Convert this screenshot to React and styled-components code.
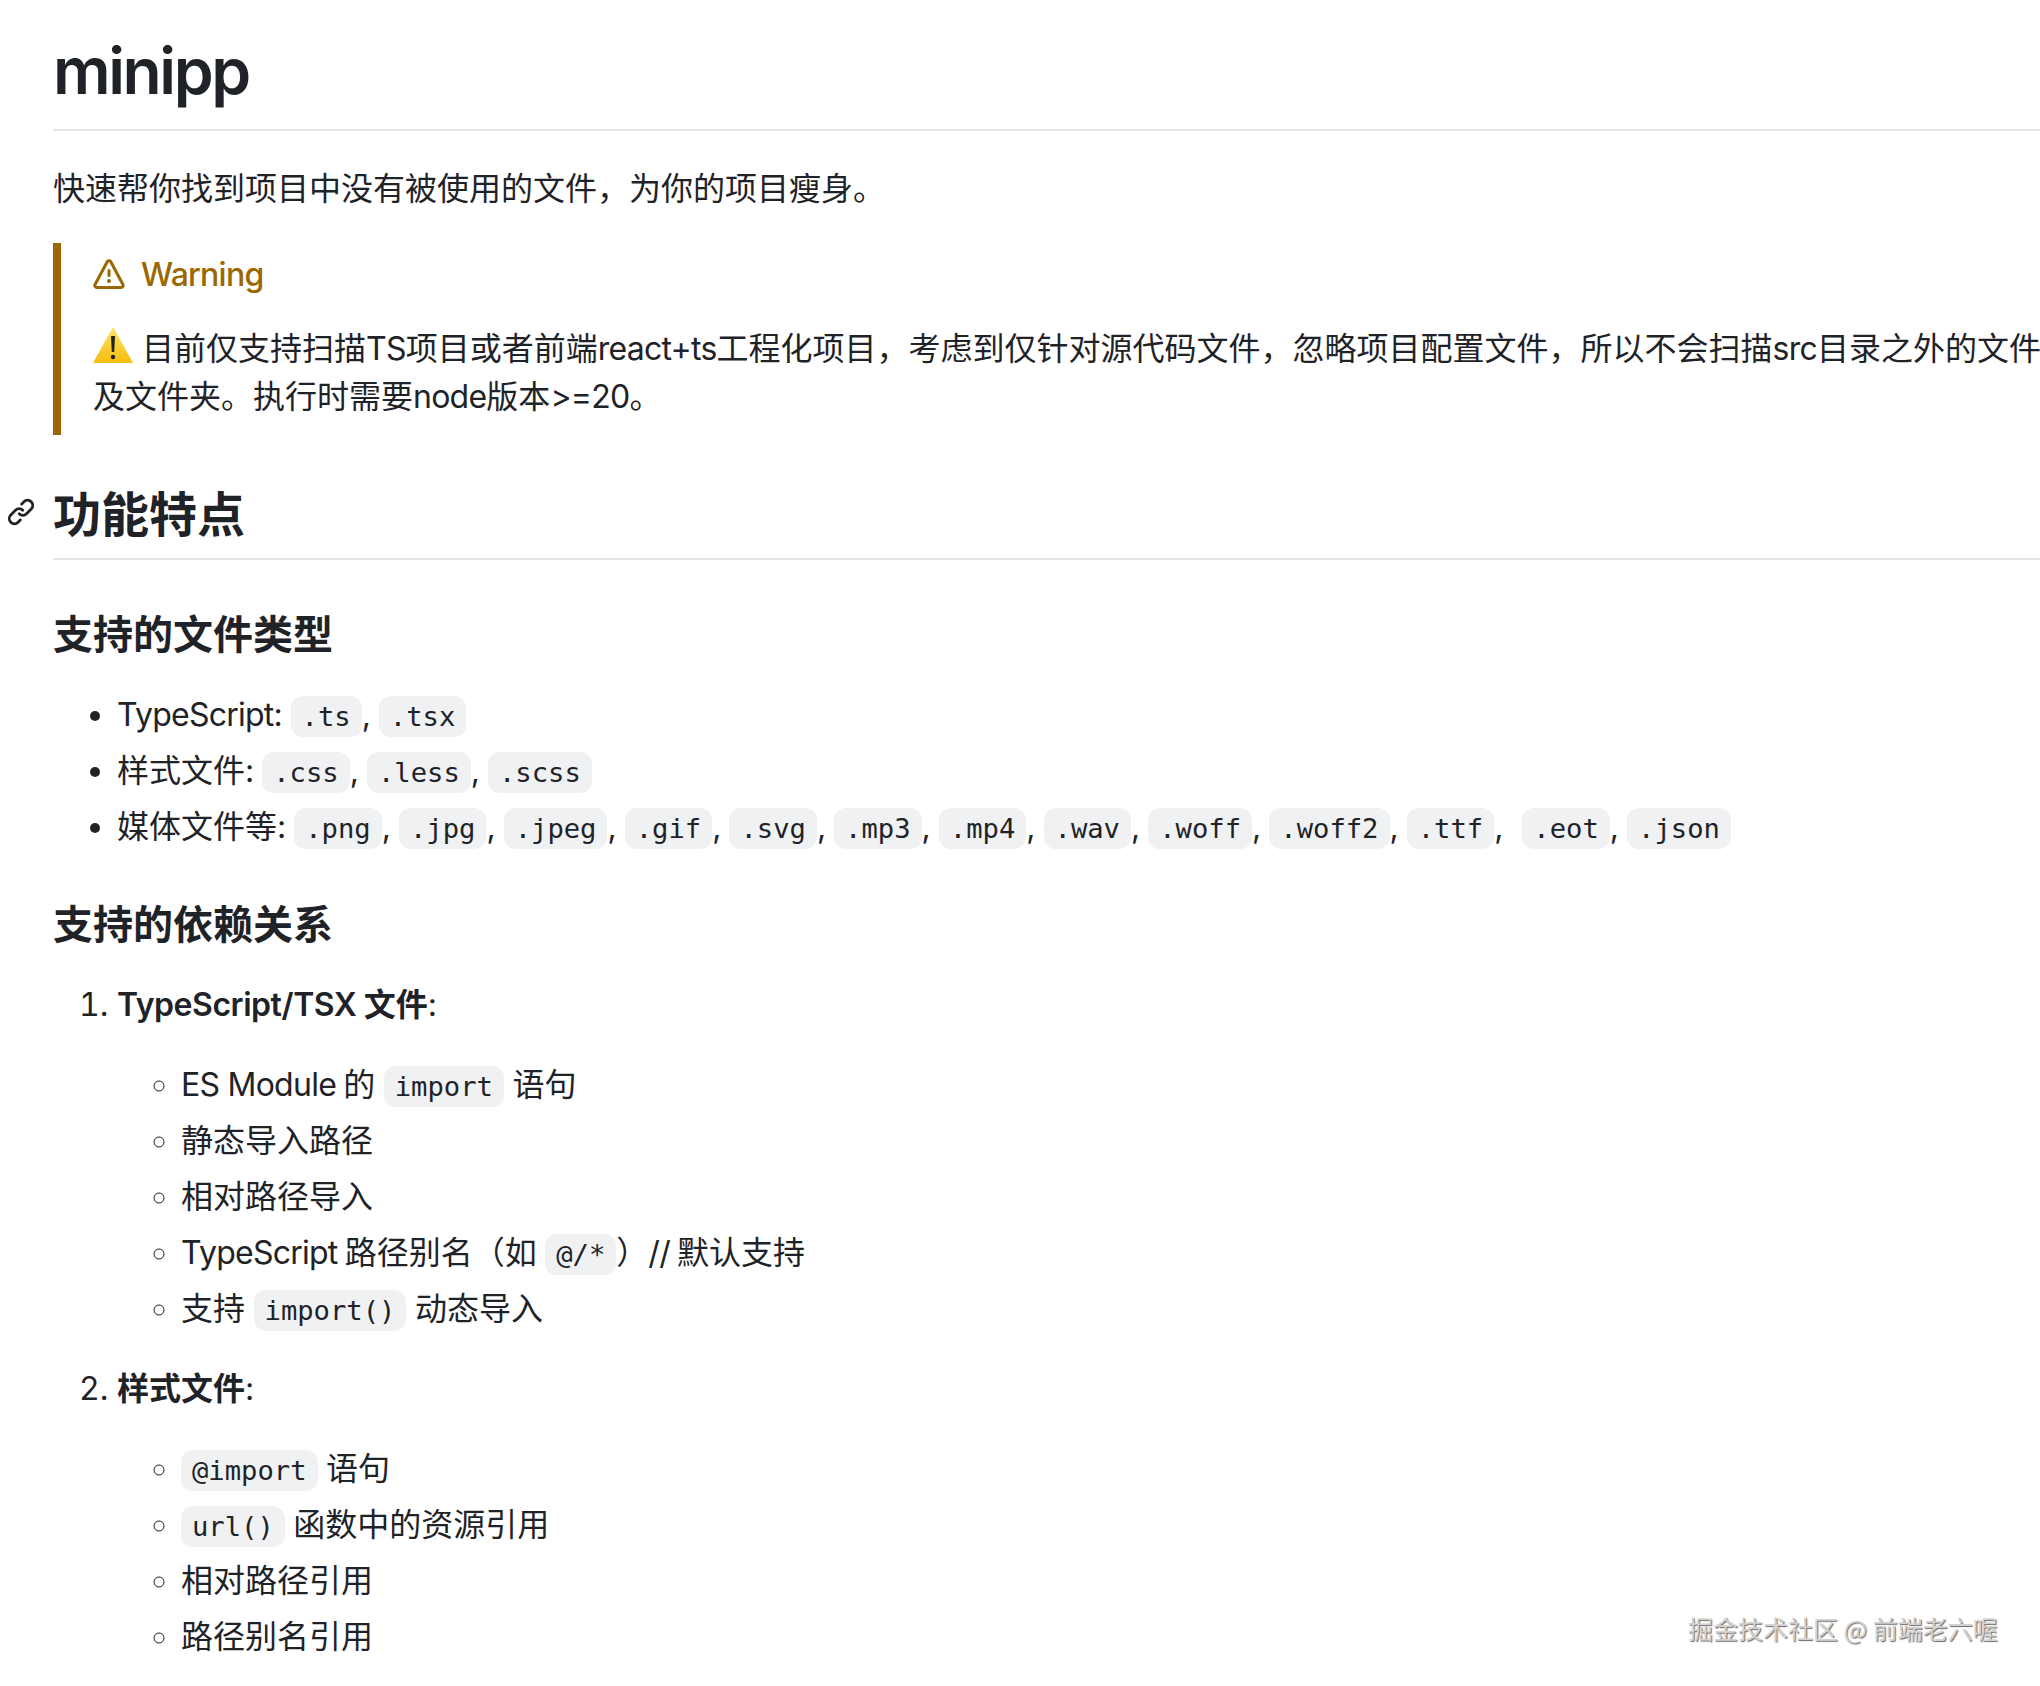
import styled, { createGlobalStyle } from 'styled-components'

const GlobalStyle = createGlobalStyle`
  html, body {
    margin: 0;
    padding: 0;
    background: #fff;
  }
  body {
    width: 2040px;
    height: 1686px;
    overflow: hidden;
  }
`

const Page = styled.div`
  position: relative;
  width: 2040px;
  height: 1686px;
  overflow: hidden;
  box-sizing: border-box;
  padding: 30px 0 0 53px;
  color: #1f2328;
  font-family: "Noto Sans CJK SC", sans-serif;
  font-size: 32px;
  line-height: 48px;
`

// latin runs in the reference are tighter than Inter's default tracking
const Latin = styled.span`
  font-family: Inter, sans-serif;
  line-height: 1;
  letter-spacing: -0.75px;
`

// commas, colons and the spaces round the code chips
const Punct = styled.span`
  font-family: Inter, sans-serif;
  font-weight: 400;
  line-height: 1;
  letter-spacing: -0.5px;
  white-space: pre-wrap;
`

const Title = styled.h1`
  margin: 0 0 31px;
  padding: 1px 0 18px;
  border-bottom: 2px solid #e2e4e7;
  font-family: Inter, sans-serif;
  font-size: 64px;
  line-height: 80px;
  font-weight: 600;
  letter-spacing: -2.4px;
`

const Para = styled.p`
  margin: 0 0 33px;
`

const Alert = styled.div`
  border-left: 8px solid #9a6700;
  padding: 8px 0 17px 32px;
  margin-bottom: 46px;
  white-space: nowrap;
`

const AlertTitle = styled.p`
  display: flex;
  align-items: center;
  gap: 16px;
  height: 48px;
  margin: 0 0 23px;
  color: #9a6700;
  font-weight: 500;
`

const AlertText = styled.p`
  margin: 0;
`

const Emoji = styled.svg`
  width: 40px;
  height: 36px;
  margin-right: 9px;
  vertical-align: -3px;
`

const Section = styled.h2`
  position: relative;
  margin: 0 0 47px;
  padding-bottom: 17px;
  border-bottom: 2px solid #e2e4e7;
  font-size: 48px;
  line-height: 60px;
  font-weight: 700;
`

const Anchor = styled.svg`
  position: absolute;
  left: -47px;
  top: 16px;
  width: 30px;
  height: 30px;
  color: #1f2328;
`

const SubTitle = styled.h3`
  margin: 0 0 31px;
  font-size: 40px;
  line-height: 50px;
  font-weight: 700;
`

const BulletList = styled.ul`
  margin: 0 0 49px;
  padding-left: 64px;
  list-style: disc;
`

const NumberList = styled.ol`
  margin: 0;
  padding-left: 64px;
`

const NestedList = styled.ul`
  margin: 0;
  padding-left: 64px;
  list-style: circle;
`

const Item = styled.li`
  &::marker {
    font-family: Inter, sans-serif;
  }
  & + & {
    margin-top: 8px;
  }
`

const NumberItem = styled.li`
  &::marker {
    font-family: Inter, sans-serif;
  }
  & + & {
    margin-top: 32px;
  }
`

const ItemHead = styled.p`
  margin: 0 0 32px;
  font-weight: 600;

  ${Latin} {
    letter-spacing: -0.45px;
  }
`

const Code = styled.code`
  padding: 5px 11px;
  border-radius: 12px;
  background: #eff1f3;
  font-family: "DejaVu Sans Mono", "Liberation Mono", monospace;
  font-size: 27.2px;
  line-height: 1;
`

const Watermark = styled.div`
  position: absolute;
  left: 1688px;
  top: 1610px;
  color: #d2d2d2;
  font-size: 25px;
  line-height: 36px;
  white-space: nowrap;
  text-shadow: 1px 1px 1px #6a6a6a;
`

const mediaTypes = ['.png', '.jpg', '.jpeg', '.gif', '.svg', '.mp3', '.mp4', '.wav', '.woff', '.woff2', '.ttf']

export default function App() {
  return (
    <Page>
      <GlobalStyle />
      <Title>minipp</Title>
      <Para>快速帮你找到项目中没有被使用的文件，为你的项目瘦身。</Para>

      <Alert>
        <AlertTitle>
          <svg viewBox="0 0 16 16" width="32" height="32" fill="currentColor">
            <path d="M6.457 1.047c.659-1.234 2.427-1.234 3.086 0l6.082 11.378A1.75 1.75 0 0 1 14.082 15H1.918a1.75 1.75 0 0 1-1.543-2.575Zm1.763.707a.25.25 0 0 0-.44 0L1.698 13.132a.25.25 0 0 0 .22.368h12.164a.25.25 0 0 0 .22-.368Zm.53 3.996v2.5a.75.75 0 0 1-1.5 0v-2.5a.75.75 0 0 1 1.5 0ZM9 11a1 1 0 1 1-2 0 1 1 0 0 1 2 0Z" />
          </svg>
          <Latin>Warning</Latin>
        </AlertTitle>
        <AlertText>
          <Emoji viewBox="0 0 40 36">
            <defs>
              <linearGradient id="warn" x1="0" y1="0" x2="0" y2="1">
                <stop offset="0" stopColor="#fde468" />
                <stop offset="1" stopColor="#f7bd0c" />
              </linearGradient>
            </defs>
            <path d="M20 0 L40 36 H0 Z" fill="url(#warn)" />
            <path d="M18 9 h4 l-.8 16 h-2.4 Z" fill="#222" />
            <circle cx="20" cy="30" r="2.2" fill="#222" />
          </Emoji>
          目前仅支持扫描<Latin>TS</Latin>项目或者前端<Latin>react+ts</Latin>工程化项目，考虑到仅针对源代码文件，忽略项目配置文件，所以不会扫描<Latin>src</Latin>目录之外的文件
          <br />
          及文件夹。执行时需要<Latin>node</Latin>版本<Latin>&gt;=20</Latin>。
        </AlertText>
      </Alert>

      <Section>
        <Anchor viewBox="0 0 16 16" fill="currentColor">
          <path d="m7.775 3.275 1.25-1.25a3.5 3.5 0 1 1 4.95 4.95l-2.5 2.5a3.5 3.5 0 0 1-4.95 0 .751.751 0 0 1 .018-1.042.751.751 0 0 1 1.042-.018 1.998 1.998 0 0 0 2.83 0l2.5-2.5a2.002 2.002 0 0 0-2.83-2.83l-1.25 1.25a.751.751 0 0 1-1.042-.018.751.751 0 0 1-.018-1.042Zm-4.69 9.64a1.998 1.998 0 0 0 2.83 0l1.25-1.25a.751.751 0 0 1 1.042.018.751.751 0 0 1 .018 1.042l-1.25 1.25a3.5 3.5 0 1 1-4.95-4.95l2.5-2.5a3.5 3.5 0 0 1 4.95 0 .751.751 0 0 1-.018 1.042.751.751 0 0 1-1.042.018 1.998 1.998 0 0 0-2.83 0l-2.5 2.5a1.998 1.998 0 0 0 0 2.83Z" />
        </Anchor>
        功能特点
      </Section>

      <SubTitle>支持的文件类型</SubTitle>
      <BulletList>
        <Item><Latin>TypeScript:</Latin><Punct> </Punct><Code>.ts</Code><Punct>, </Punct><Code>.tsx</Code></Item>
        <Item>样式文件<Punct>: </Punct><Code>.css</Code><Punct>, </Punct><Code>.less</Code><Punct>, </Punct><Code>.scss</Code></Item>
        <Item>
          媒体文件等<Punct>: </Punct>
          {mediaTypes.map(t => <span key={t}><Code>{t}</Code><Punct>, </Punct></span>)}
          <Punct>&nbsp;&#8202;</Punct><Code>.eot</Code><Punct>, </Punct><Code>.json</Code>
        </Item>
      </BulletList>

      <SubTitle>支持的依赖关系</SubTitle>
      <NumberList>
        <NumberItem>
          <ItemHead><Latin>TypeScript/TSX</Latin> 文件<Punct>:</Punct></ItemHead>
          <NestedList>
            <Item><Latin>ES Module</Latin> 的<Punct> </Punct><Code>import</Code><Punct> </Punct>语句</Item>
            <Item>静态导入路径</Item>
            <Item>相对路径导入</Item>
            <Item><Latin>TypeScript</Latin> 路径别名（如<Punct> </Punct><Code>@/*</Code>）<Latin>//</Latin> 默认支持</Item>
            <Item>支持<Punct> </Punct><Code>import()</Code><Punct> </Punct>动态导入</Item>
          </NestedList>
        </NumberItem>
        <NumberItem>
          <ItemHead>样式文件<Punct>:</Punct></ItemHead>
          <NestedList>
            <Item><Code>@import</Code><Punct> </Punct>语句</Item>
            <Item><Code>url()</Code><Punct> </Punct>函数中的资源引用</Item>
            <Item>相对路径引用</Item>
            <Item>路径别名引用</Item>
          </NestedList>
        </NumberItem>
      </NumberList>

      <Watermark>掘金技术社区 @ 前端老六喔</Watermark>
    </Page>
  )
}
